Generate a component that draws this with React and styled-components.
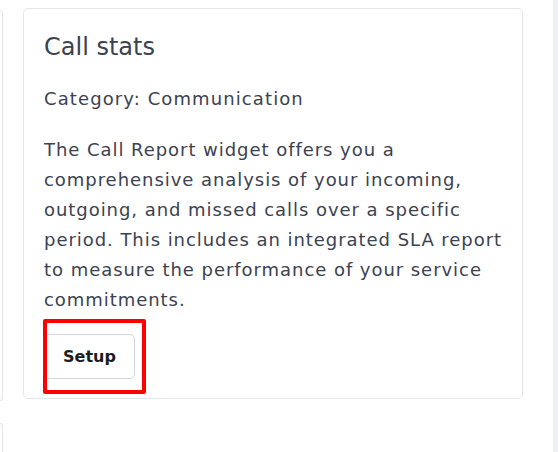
import React from 'react'
import styled, { createGlobalStyle } from 'styled-components'

const GlobalStyle = createGlobalStyle`
  html, body {
    margin: 0;
    padding: 0;
    background: #ffffff;
    overflow: hidden;
  }
  body {
    font-family: "DejaVu Sans", "Noto Sans", sans-serif;
  }
`

const Page = styled.div`
  display: flex;
  width: 558px;
  height: 452px;
  overflow: hidden;
`

const Content = styled.div`
  flex: 1;
  display: grid;
  grid-template-columns: 3px 500px;
  column-gap: 20px;
  row-gap: 22px;
  align-content: start;
  align-items: start;
  padding-top: 8px;
`

const Track = styled.div`
  width: 5px;
  background: #eef0f4;
`

const Sliver = styled.div`
  border: 1px solid #e3e7ed;
  border-left: none;
  border-radius: 0 5px 5px 0;
  height: ${p => p.h}px;
  margin-top: ${p => p.top || 0}px;
`

const Card = styled.div`
  border: 1px solid #e3e7ed;
  border-radius: 5px;
  padding: 23px 4px 19px 20px;
  color: #3b4251;
`

const Title = styled.h2`
  margin: 0;
  font-size: 24px;
  line-height: 30px;
  font-weight: 400;
`

const Category = styled.p`
  margin: 22px 0 0;
  font-size: 18px;
  line-height: 30px;
  letter-spacing: 1.1px;
`

const Description = styled.p`
  margin: 21px 0 0;
  font-size: 18px;
  line-height: 30px;
  letter-spacing: 0.95px;
`

const Actions = styled.div`
  position: relative;
  margin-top: 19px;
  display: flex;
`

const SetupButton = styled.button`
  height: 45px;
  width: 91px;
  border: 1px solid #cfd4de;
  border-radius: 5px;
  background: #fff;
  color: #1a1d24;
  font-family: "DejaVu Sans", sans-serif;
  font-size: 16px;
  font-weight: 600;
  cursor: pointer;
`

const Highlight = styled.div`
  position: absolute;
  left: -1px;
  top: -15px;
  width: 103px;
  height: 75px;
  box-sizing: border-box;
  border: 4px solid #ff0000;
  border-radius: 2px;
  pointer-events: none;
`

export default function App() {
  return (
    <Page>
      <GlobalStyle />
      <Content>
        <Sliver h={389} top={2} />
        <Card>
          <Title>Call stats</Title>
          <Category>Category: Communication</Category>
          <Description>
            The Call Report widget offers you a comprehensive analysis of your incoming,
            outgoing, and missed calls over a specific period. This includes an integrated
            SLA report to measure the performance of your service commitments.
          </Description>
          <Actions>
            <SetupButton>Setup</SetupButton>
            <Highlight />
          </Actions>
        </Card>
        <Sliver h={60} />
      </Content>
      <Track />
    </Page>
  )
}
